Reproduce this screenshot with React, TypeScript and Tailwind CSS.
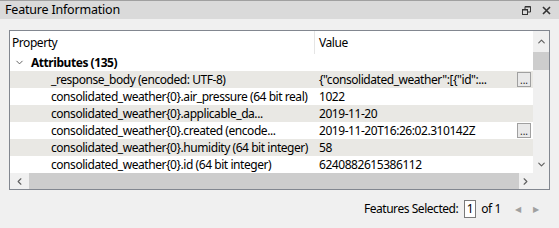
import { ChevronDown, ChevronUp, ChevronLeft, ChevronRight } from 'lucide-react';

const rows = [
  { name: '_response_body (encoded: UTF-8)', value: '{"consolidated_weather":[{"id":...', more: true },
  { name: 'consolidated_weather{0}.air_pressure (64 bit real)', value: '1022' },
  { name: 'consolidated_weather{0}.applicable_da...', value: '2019-11-20' },
  { name: 'consolidated_weather{0}.created (encode...', value: '2019-11-20T16:26:02.310142Z', more: true },
  { name: 'consolidated_weather{0}.humidity (64 bit integer)', value: '58' },
  { name: 'consolidated_weather{0}.id (64 bit integer)', value: '6240882615386112' },
];

function RestoreIcon() {
  return (
    <svg width="9" height="9" viewBox="0 0 9 9" className="text-[#333]">
      <rect x="0.5" y="3.5" width="5" height="5" fill="none" stroke="currentColor" />
      <path d="M3 3V0.5H8.5V6H6" fill="none" stroke="currentColor" />
      <rect x="0.5" y="3.5" width="5" height="1" fill="currentColor" />
      <rect x="3" y="0.5" width="5.5" height="1" fill="currentColor" />
    </svg>
  );
}

function CloseIcon() {
  return (
    <svg width="9" height="9" viewBox="0 0 9 9" className="text-[#333]">
      <path d="M1 1L8 8M8 1L1 8" stroke="currentColor" strokeWidth="1.6" />
    </svg>
  );
}

export default function App() {
  return (
    <div className="w-[559px] h-[228px] bg-[#f0f0f0] text-[12px] tracking-[-0.45px] text-black overflow-hidden" style={{ fontFamily: '"Noto Sans", "Open Sans", sans-serif' }}>
      <div className="h-[19px] border-t border-[#a0a0a0] bg-[#dadada] flex items-center pl-[5px] pr-[8px]">
        <span className="leading-none text-[12.5px] tracking-[-0.2px]">Feature Information</span>
        <div className="ml-auto flex items-center gap-[11px]">
          <RestoreIcon />
          <CloseIcon />
        </div>
      </div>

      <div className="pl-[9px] pt-[11px]">
        <div className="w-[541px] h-[160px] border border-[#828790] bg-white flex flex-col">
          <div className="flex h-[142px]">
            <div className="flex-1 overflow-hidden">
              <div className="h-[23px] flex items-center">
                <div className="w-[305px] h-full pl-[2px] flex items-center border-r border-[#e5e5e5]">Property</div>
                <div className="pl-[4px]">Value</div>
              </div>
              <div className="h-[17px] flex items-center">
                <ChevronDown size={11} strokeWidth={2} className="ml-[4px] text-[#555]" />
                <span className="ml-[6px] font-bold">Attributes (135)</span>
              </div>
              {rows.map((r, i) => (
                <div key={i} className={`h-[17px] flex items-center whitespace-nowrap ${i % 2 === 0 ? 'bg-[#e9e8e4]' : 'bg-white'}`}>
                  <div className="w-[305px] pl-[41px] overflow-hidden">{r.name}</div>
                  <div className="flex-1 pl-[4px] pr-[2px] flex items-center">
                    <span>{r.value}</span>
                    {r.more && (
                      <span className="ml-auto w-[14px] h-[15px] border border-[#a0a0a0] bg-[#e9e9e9] flex items-end justify-center text-[10px] leading-[11px] tracking-normal text-[#222]">...</span>
                    )}
                  </div>
                </div>
              ))}
            </div>
            <div className="w-[16px] bg-[#f0f0f0] flex flex-col items-center">
              <div className="h-[21px] flex items-center justify-center">
                <ChevronUp size={11} strokeWidth={2.5} className="text-[#606060]" />
              </div>
              <div className="w-full h-[18px] bg-[#cdcdcd]" />
              <div className="flex-1" />
              <div className="h-[18px] flex items-center justify-center">
                <ChevronDown size={11} strokeWidth={2.5} className="text-[#606060]" />
              </div>
            </div>
          </div>
          <div className="flex h-[16px] bg-[#f0f0f0]">
            <div className="w-[19px] flex items-center justify-center">
              <ChevronLeft size={11} strokeWidth={2.5} className="text-[#606060]" />
            </div>
            <div className="w-[490px] bg-[#cdcdcd]" />
            <div className="w-[13px] flex items-center justify-center">
              <ChevronRight size={11} strokeWidth={2.5} className="text-[#606060]" />
            </div>
            <div className="flex-1" />
          </div>
        </div>
      </div>

      <div className="flex items-center justify-end h-[38px] pr-[20px]">
        <span>Features Selected:</span>
        <span className="ml-[6px] w-[12px] h-[18px] border border-[#7a7a7a] bg-white flex items-center justify-center tracking-normal">1</span>
        <span className="ml-[5px]">of 1</span>
        <span className="ml-[14px] text-[#a0a0a0] text-[8px]">◀</span>
        <span className="ml-[13px] text-[#a0a0a0] text-[8px]">▶</span>
      </div>
    </div>
  );
}
